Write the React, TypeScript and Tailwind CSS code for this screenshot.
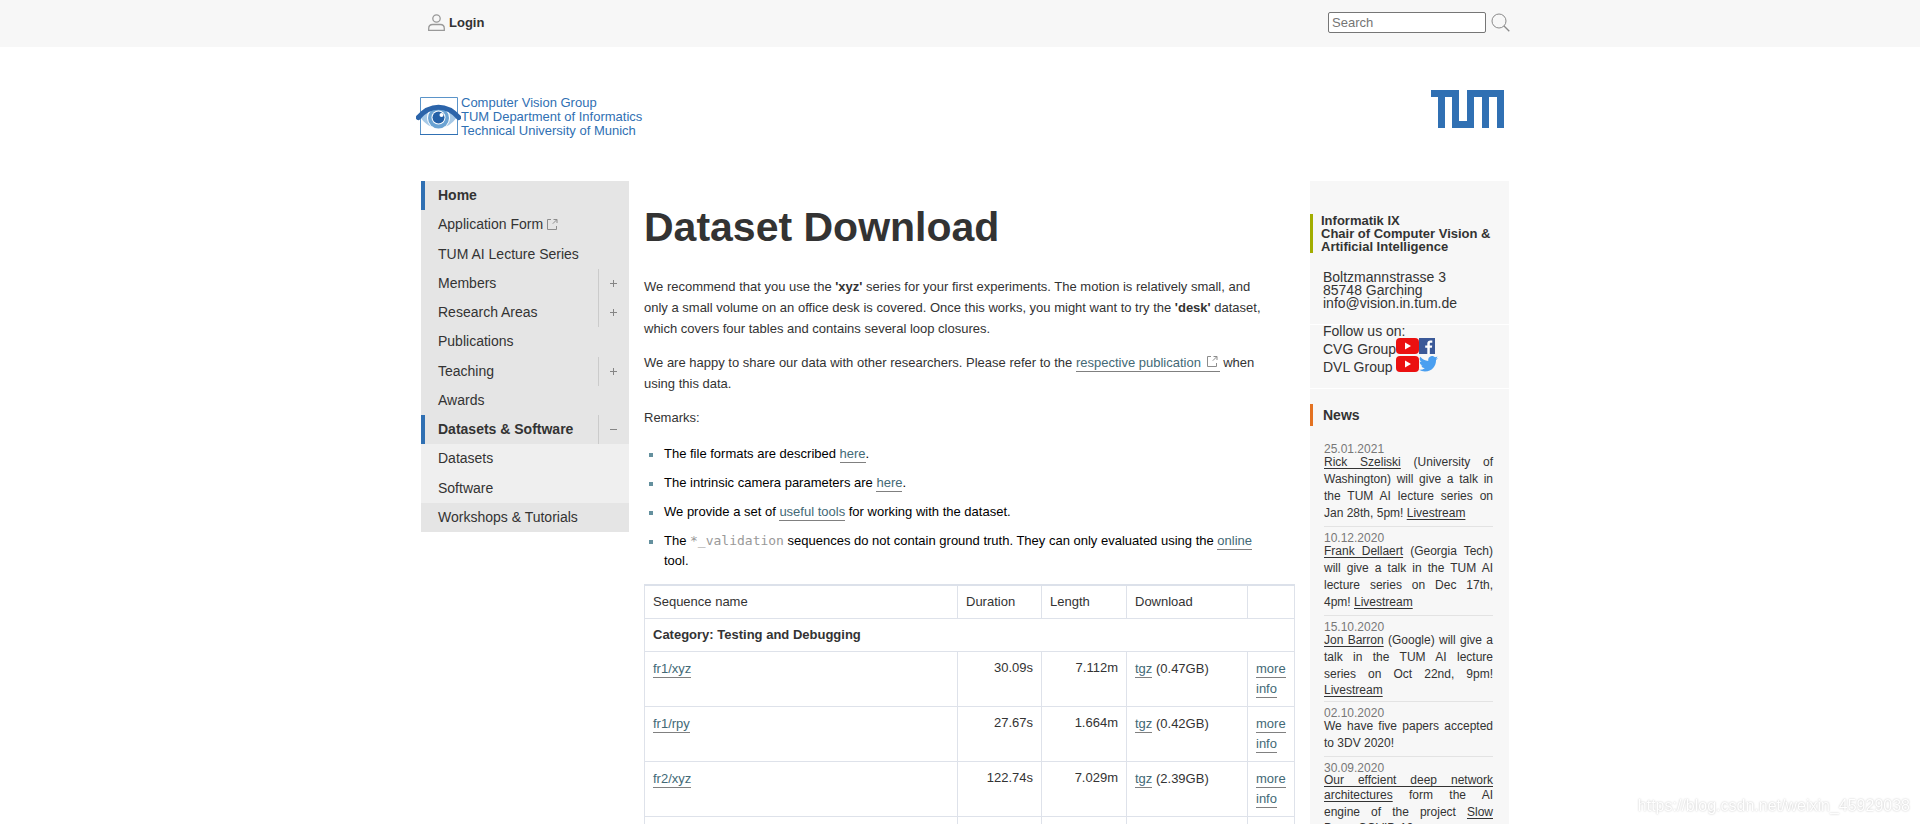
import { Fragment, ReactNode } from "react";

interface NavItem {
  label: string;
  bold?: boolean;
  sub?: boolean;
  external?: boolean;
  toggle?: "plus" | "minus";
}

interface Sequence {
  name: string;
  duration: string;
  length: string;
  size: string;
}

interface NewsItem {
  date: string;
  body: ReactNode;
}

const navItems: NavItem[] = [
  { label: "Home", bold: true },
  { label: "Application Form", external: true },
  { label: "TUM AI Lecture Series" },
  { label: "Members", toggle: "plus" },
  { label: "Research Areas", toggle: "plus" },
  { label: "Publications" },
  { label: "Teaching", toggle: "plus" },
  { label: "Awards" },
  { label: "Datasets & Software", bold: true, toggle: "minus" },
  { label: "Datasets", sub: true },
  { label: "Software", sub: true },
  { label: "Workshops & Tutorials" },
];

const sequences: Sequence[] = [
  { name: "fr1/xyz", duration: "30.09s", length: "7.112m", size: "0.47GB" },
  { name: "fr1/rpy", duration: "27.67s", length: "1.664m", size: "0.42GB" },
  { name: "fr2/xyz", duration: "122.74s", length: "7.029m", size: "2.39GB" },
  { name: "fr2/rpy", duration: "109.97s", length: "1.506m", size: "2.12GB" },
];

const news: NewsItem[] = [
  {
    date: "25.01.2021",
    body: (
      <>
        <NewsLink>Rick Szeliski</NewsLink>
        <Copy> (University of Washington) will give a talk in the TUM AI lecture series on Jan 28th, 5pm! </Copy>
        <NewsLink>Livestream</NewsLink>
      </>
    ),
  },
  {
    date: "10.12.2020",
    body: (
      <>
        <NewsLink>Frank Dellaert</NewsLink>
        <Copy> (Georgia Tech) will give a talk in the TUM AI lecture series on Dec 17th, 4pm! </Copy>
        <NewsLink>Livestream</NewsLink>
      </>
    ),
  },
  {
    date: "15.10.2020",
    body: (
      <>
        <NewsLink>Jon Barron</NewsLink>
        <Copy> (Google) will give a talk in the TUM AI lecture series on Oct 22nd, 9pm! </Copy>
        <NewsLink>Livestream</NewsLink>
      </>
    ),
  },
  {
    date: "02.10.2020",
    body: <Copy>We have five papers accepted to 3DV 2020!</Copy>,
  },
  {
    date: "30.09.2020",
    body: (
      <>
        <NewsLink>Our effcient deep network architectures</NewsLink>
        <Copy> form the AI engine of the project </Copy>
        <NewsLink>Slow Down COVID-19</NewsLink>
      </>
    ),
  },
];

function Copy({ children }: { children: ReactNode }) {
  return <span className="leading-[17px]">{children}</span>;
}

function NewsLink({ children }: { children: ReactNode }) {
  return (
    <a href="#" className="underline underline-offset-2">
      {children}
    </a>
  );
}

function TextLink({ children }: { children: ReactNode }) {
  return (
    <a href="#" className="text-[#436976] border-b border-[#808080] pb-px">
      {children}
    </a>
  );
}

function ExternalIcon({ className }: { className?: string }) {
  return (
    <svg viewBox="0 0 11 11" className={`w-[11px] h-[11px] ${className ?? ""}`} fill="none" stroke="#8c8c8c" aria-hidden="true">
      <path d="M4 .5H.5v10h9V7M6.5 .5h3.5v3.5M9.7 .8L5.8 4.7" />
    </svg>
  );
}

function ToggleIcon({ kind }: { kind: "plus" | "minus" }) {
  return (
    <svg viewBox="0 0 7 7" className="w-[7px] h-[7px]" stroke="#858585" aria-hidden="true">
      <path d={kind === "plus" ? "M0 3.5h7M3.5 0v7" : "M0 3.5h7"} />
    </svg>
  );
}

function EyeLogo() {
  return (
    <svg viewBox="0 0 45 38" className="w-[45px] h-[38px] shrink-0" aria-hidden="true">
      <path d="M4.5 .5h37v37h-37z" fill="#fff" stroke="#5b94c9" />
      <path d="M4 37.5h38" stroke="#3070b3" />
      <path d="M4 20C9 14 15 11 22.5 11S36 14 41 20C36 27 30 31 22.5 31S9 27 4 20z" fill="#a5c8e6" />
      <circle cx="22.5" cy="20.5" r="11.5" fill="#fff" />
      <circle cx="22.5" cy="21" r="10.5" fill="#6ba3d3" />
      <circle cx="22.5" cy="20.5" r="7" fill="#fff" />
      <circle cx="22.5" cy="20.5" r="6" fill="#2460a7" />
      <circle cx="25.5" cy="18" r="2" fill="#fff" />
      <path d="M2.3 20.5C8 14 15 10.3 22.5 10.3S37 14 42.7 20.5" fill="none" stroke="#2b64aa" strokeWidth="5" strokeLinecap="round" />
    </svg>
  );
}

function TumLogo() {
  return (
    <svg viewBox="0 0 73 38" className="w-[73px] h-[38px]" fill="#3070b3" aria-hidden="true">
      <path d="M0 0h28v31h8V0h37v38h-7V7h-8v31h-7V7h-8v31H21V7h-7v31H7V7H0z" />
    </svg>
  );
}

function YoutubeIcon() {
  return (
    <svg viewBox="0 0 23 16" className="w-[23px] h-4" aria-hidden="true">
      <rect width="23" height="16" rx="4" fill="#eb1010" />
      <path d="M9 4.6v6.8l6-3.4z" fill="#fff" />
    </svg>
  );
}

function FacebookIcon() {
  return (
    <svg viewBox="0 0 16 16" className="w-4 h-4" aria-hidden="true">
      <rect width="16" height="16" fill="#3b5998" />
      <path d="M8.3 16V9.8H6.2V7.4h2.1V5.6c0-2.1 1.3-3.2 3.1-3.2.9 0 1.7.1 1.9.1v2.2H12c-1 0-1.2.5-1.2 1.2v1.5h2.4l-.3 2.4h-2.1V16z" fill="#fff" />
    </svg>
  );
}

function TwitterIcon() {
  return (
    <svg viewBox="0 0 24 20" className="w-[19px] h-4" fill="#4a9ff0" aria-hidden="true">
      <path d="M24 2.4a9.8 9.8 0 0 1-2.8.8A4.9 4.9 0 0 0 23.3.4a9.9 9.9 0 0 1-3.1 1.2 4.9 4.9 0 0 0-8.4 4.5A14 14 0 0 1 1.7.9a4.9 4.9 0 0 0 1.5 6.6A4.9 4.9 0 0 1 1 6.9v.1a4.9 4.9 0 0 0 3.9 4.8 4.9 4.9 0 0 1-2.2.1 4.9 4.9 0 0 0 4.6 3.4A9.9 9.9 0 0 1 0 17.3a13.9 13.9 0 0 0 7.5 2.2c9.1 0 14-7.5 14-14v-.6A10 10 0 0 0 24 2.4z" />
    </svg>
  );
}

function TopBar() {
  return (
    <header className="bg-[#f7f7f7]">
      <div className="max-w-[1096px] mx-auto h-[47px] pl-4 pb-0.5 flex items-center justify-between">
        <a href="#" className="flex items-center gap-1 font-bold text-[13px]">
          <svg viewBox="0 0 17 17" className="w-[17px] h-[17px]" fill="none" stroke="#999" aria-hidden="true">
            <circle cx="8.5" cy="4.5" r="3.7" strokeWidth="1.3" />
            <path d="M.7 16.3v-1.8c0-2.6 1.4-4 4-4h7.6c2.6 0 4 1.4 4 4v1.8z" strokeWidth="1.3" />
          </svg>
          Login
        </a>
        <form className="flex items-center gap-1 -mr-[3px]">
          <input
            type="text"
            aria-label="Search"
            placeholder="Search"
            className="w-[158px] h-[21px] bg-white border border-[#767676] rounded-xs px-[3px] text-[13px] leading-4 placeholder:text-[#757575]"
          />
          <button type="submit" aria-label="Submit search" className="p-px">
            <svg viewBox="0 0 19 19" className="w-[19px] h-[19px]" fill="none" stroke="#8a8a8a" aria-hidden="true">
              <circle cx="8" cy="8" r="7" />
              <path d="M13 13l5.3 5.3" strokeWidth="1.3" />
            </svg>
          </button>
        </form>
      </div>
    </header>
  );
}

function SideNav() {
  return (
    <nav className="w-[208px] shrink-0 text-[14px]">
      <ul className="h-[351px] flex flex-col">
        {navItems.map((item) => (
          <li
            key={item.label}
            className={`flex-1 flex items-stretch border-l-4 ${item.sub ? "bg-[#efefef]" : "bg-[#e5e5e5]"} ${
              item.bold ? "border-[#3070b3] font-bold" : item.sub ? "border-[#efefef]" : "border-[#e5e5e5]"
            }`}
          >
            <a href="#" className="flex-1 flex items-center gap-1 pl-[13px]">
              {item.label}
              {item.external && <ExternalIcon />}
            </a>
            {item.toggle && (
              <button
                type="button"
                aria-label={`Toggle ${item.label}`}
                className="w-[31px] pr-px flex items-center justify-center border-l border-[#cbcbcb]"
              >
                <ToggleIcon kind={item.toggle} />
              </button>
            )}
          </li>
        ))}
      </ul>
    </nav>
  );
}

function SequenceTable() {
  const cell = "border border-[#dee2ea] px-2";
  return (
    <table className="w-full mt-[13px] table-fixed border-collapse border-t-2 border-[#dce1ea] text-[13px] leading-5 text-left">
      <colgroup>
        <col />
        <col className="w-[84px]" />
        <col className="w-[85px]" />
        <col className="w-[121px]" />
        <col className="w-[47px]" />
      </colgroup>
      <thead>
        <tr className="h-[33px]">
          <th className={`${cell} font-normal`}>Sequence name</th>
          <th className={`${cell} font-normal`}>Duration</th>
          <th className={`${cell} font-normal`}>Length</th>
          <th className={`${cell} font-normal`}>Download</th>
          <td className={cell} />
        </tr>
      </thead>
      <tbody>
        <tr className="h-[33px]">
          <th colSpan={5} className={`${cell} font-bold`}>Category: Testing and Debugging</th>
        </tr>
        {sequences.map((seq) => (
          <tr key={seq.name} className="h-[55px] align-top">
            <td className={`${cell} pt-[7px]`}><TextLink>{seq.name}</TextLink></td>
            <td className={`${cell} pt-1.5 text-right`}>{seq.duration}</td>
            <td className={`${cell} pt-1.5 text-right`}>{seq.length}</td>
            <td className={`${cell} pt-[7px]`}><TextLink>tgz</TextLink> ({seq.size})</td>
            <td className={`${cell} pt-[7px]`}><TextLink>more info</TextLink></td>
          </tr>
        ))}
      </tbody>
    </table>
  );
}

function MainContent() {
  const remarks: ReactNode[] = [
    <>The file formats are described <TextLink>here</TextLink>.</>,
    <>The intrinsic camera parameters are <TextLink>here</TextLink>.</>,
    <>We provide a set of <TextLink>useful tools</TextLink> for working with the dataset.</>,
    <>
      The <code className="font-['DejaVu_Sans_Mono',monospace] text-[#999]">*_validation</code> sequences do not contain
      ground truth. They can only evaluated using the <TextLink>online</TextLink> tool.
    </>,
  ];

  return (
    <main className="flex-1 min-w-0">
      <h1 className="mt-[22px] mb-[25px] text-[41px] leading-12 font-bold">Dataset Download</h1>
      <div className="space-y-[13px] pr-6 leading-[21px]">
        <p>
          We recommend that you use the <b>'xyz'</b> series for your first experiments. The motion is relatively small,
          and only a small volume on an office desk is covered. Once this works, you might want to try the{" "}
          <b>'desk'</b> dataset, which covers four tables and contains several loop closures.
        </p>
        <p>
          We are happy to share our data with other researchers. Please refer to the{" "}
          <TextLink>
            respective publication <ExternalIcon className="inline align-baseline mx-[2px]" />
          </TextLink>{" "}
          when using this data.
        </p>
        <p>Remarks:</p>
      </div>
      <ul className="mt-4 space-y-[9px] pr-6 leading-5 text-black">
        {remarks.map((remark, idx) => (
          <li key={idx} className="flex">
            <span className="w-1 h-1 mt-[9px] ml-[5px] mr-[11px] shrink-0 bg-[#64909e]" />
            <div>{remark}</div>
          </li>
        ))}
      </ul>
      <SequenceTable />
    </main>
  );
}

function InfoColumn() {
  return (
    <aside className="w-[199px] shrink-0 bg-[#f7f7f7] pt-[33px] text-[14px]">
      <h2 className="border-l-3 border-[#a2ad00] pl-2 font-bold text-[13px] leading-[13px]">
        Informatik IX<br />
        Chair of Computer Vision &amp; Artificial Intelligence
      </h2>
      <address className="not-italic pl-[13px] pt-[18px] pb-[14px] leading-[13px]">
        Boltzmannstrasse 3<br />
        85748 Garching<br />
        info@vision.in.tum.de
      </address>
      <div className="border-y border-white pl-[13px] pb-[14px]">
        <p className="leading-[13px]">Follow us on:</p>
        <p className="flex items-start h-[18px] leading-[22px]">
          CVG Group
          <a href="#" aria-label="CVG on YouTube"><YoutubeIcon /></a>
          <a href="#" aria-label="CVG on Facebook"><FacebookIcon /></a>
        </p>
        <p className="flex items-start h-[18px] leading-[22px]">
          DVL Group&nbsp;
          <a href="#" aria-label="DVL on YouTube"><YoutubeIcon /></a>
          <a href="#" aria-label="DVL on Twitter"><TwitterIcon /></a>
        </p>
      </div>
      <h2 className="mt-[15px] mb-[19px] border-l-3 border-[#e37222] pl-[10px] font-bold leading-[22px]">News</h2>
      <div className="pl-[14px] pr-4 text-[12px] text-justify">
        {news.map((item, idx) => (
          <Fragment key={item.date}>
            {idx > 0 && <hr className="mt-1 mb-[7px] border-[#e3e3e3]" />}
            <p className="leading-[9px] text-[#777]">{item.date}</p>
            <p className="leading-[14px]">{item.body}</p>
          </Fragment>
        ))}
      </div>
    </aside>
  );
}

export default function App() {
  return (
    <div className="h-screen overflow-hidden bg-white text-[#333] text-[13px] font-['Liberation_Sans',Arial,sans-serif]">
      <TopBar />
      <div className="max-w-[1098px] mx-auto">
        <div className="h-[134px] pt-[43px] px-[5px] flex items-start justify-between">
          <a href="#" className="flex items-center pt-1 text-[#3070b3] leading-[14px]">
            <EyeLogo />
            <span className="pt-0.5">
              Computer Vision Group<br />
              TUM Department of Informatics<br />
              Technical University of Munich
            </span>
          </a>
          <a href="#" aria-label="TUM"><TumLogo /></a>
        </div>
        <div className="pl-[10px] flex items-start gap-[15px]">
          <SideNav />
          <MainContent />
          <InfoColumn />
        </div>
      </div>
      <div className="fixed bottom-2 right-[10px] text-[16px] leading-5 text-white [text-shadow:0_0_2px_#bbb]">
        https://blog.csdn.net/weixin_45929038
      </div>
    </div>
  );
}
